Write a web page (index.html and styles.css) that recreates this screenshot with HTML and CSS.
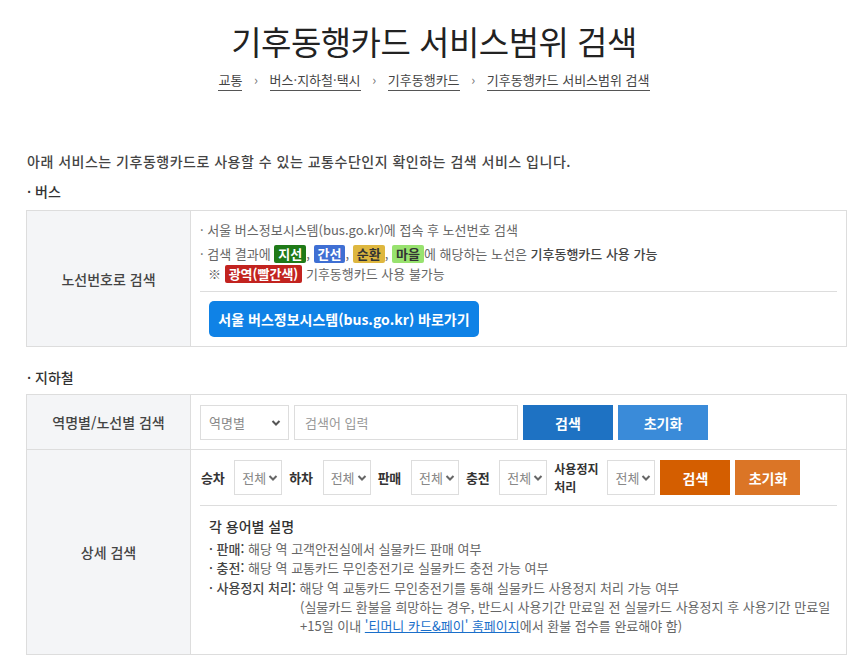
FILE: index.html
```html
<!DOCTYPE html>
<html lang="ko">
<head>
  <meta charset="UTF-8">
  <meta name="viewport" content="width=device-width, initial-scale=1.0">
  <title>기후동행카드 서비스범위 검색</title>
  <link rel="stylesheet" href="styles.css">
</head>
<body>
  <div class="page-header">
    <h1>기후동행카드 서비스범위 검색</h1>
    <div class="breadcrumb">
      <a href="#">교통</a>
      <span class="sep">&rsaquo;</span>
      <a href="#">버스·지하철·택시</a>
      <span class="sep">&rsaquo;</span>
      <a href="#">기후동행카드</a>
      <span class="sep">&rsaquo;</span>
      <a href="#">기후동행카드 서비스범위 검색</a>
    </div>
  </div>

  <div class="content">
    <p class="intro">아래 서비스는 기후동행카드로 사용할 수 있는 교통수단인지 확인하는 검색 서비스 입니다.</p>

    <!-- 버스 -->
    <h3 class="sub-title">· 버스</h3>
    <table class="search-table">
      <tr>
        <th>노선번호로 검색</th>
        <td class="bus-cell">
          <ul class="dot-list">
            <li>· 서울 버스정보시스템(bus.go.kr)에 접속 후 노선번호 검색</li>
            <li class="badge-line">· 검색 결과에 <span class="badge green">지선</span>, <span class="badge blue">간선</span>, <span class="badge yellow">순환</span>, <span class="badge lime">마을</span>에 해당하는 노선은 <strong>기후동행카드 사용 가능</strong></li>
            <li class="note">※ <span class="badge red">광역(빨간색)</span> 기후동행카드 사용 불가능</li>
          </ul>
          <div class="divider"></div>
          <a href="#" class="btn-link">서울 버스정보시스템(bus.go.kr) 바로가기</a>
        </td>
      </tr>
    </table>

    <!-- 지하철 -->
    <h3 class="sub-title">· 지하철</h3>
    <table class="search-table">
      <tr>
        <th>역명별/노선별 검색</th>
        <td class="row-cell">
          <div class="search-row">
            <div class="select-box wide">역명별
              <svg class="chev" width="10" height="8" viewBox="0 0 10 8"><path d="M1.5 2 L5 5.5 L8.5 2" fill="none" stroke="#555" stroke-width="2"/></svg>
            </div>
            <input type="text" class="keyword" placeholder="검색어 입력">
            <button type="button" class="btn blue-dark">검색</button>
            <button type="button" class="btn blue-light">초기화</button>
          </div>
        </td>
      </tr>
      <tr>
        <th>상세 검색</th>
        <td class="detail-cell">
          <div class="filter-row">
            <span class="f-label">승차</span>
            <div class="select-box small">전체<svg class="chev" width="10" height="8" viewBox="0 0 10 8"><path d="M1.5 2 L5 5.5 L8.5 2" fill="none" stroke="#666" stroke-width="2"/></svg></div>
            <span class="f-label">하차</span>
            <div class="select-box small">전체<svg class="chev" width="10" height="8" viewBox="0 0 10 8"><path d="M1.5 2 L5 5.5 L8.5 2" fill="none" stroke="#666" stroke-width="2"/></svg></div>
            <span class="f-label">판매</span>
            <div class="select-box small">전체<svg class="chev" width="10" height="8" viewBox="0 0 10 8"><path d="M1.5 2 L5 5.5 L8.5 2" fill="none" stroke="#666" stroke-width="2"/></svg></div>
            <span class="f-label">충전</span>
            <div class="select-box small">전체<svg class="chev" width="10" height="8" viewBox="0 0 10 8"><path d="M1.5 2 L5 5.5 L8.5 2" fill="none" stroke="#666" stroke-width="2"/></svg></div>
            <span class="f-label two-line"><span>사용정지</span><span>처리</span></span>
            <div class="select-box small">전체<svg class="chev" width="10" height="8" viewBox="0 0 10 8"><path d="M1.5 2 L5 5.5 L8.5 2" fill="none" stroke="#666" stroke-width="2"/></svg></div>
            <button type="button" class="btn orange-dark">검색</button>
            <button type="button" class="btn orange-light">초기화</button>
          </div>
          <div class="divider"></div>
          <div class="desc">
            <h4>각 용어별 설명</h4>
            <ul class="desc-list">
              <li><b>· 판매:</b> 해당 역 고객안전실에서 실물카드 판매 여부</li>
              <li><b>· 충전:</b> 해당 역 교통카드 무인충전기로 실물카드 충전 가능 여부</li>
              <li><b>· 사용정지 처리:</b> 해당 역 교통카드 무인충전기를 통해 실물카드 사용정지 처리 가능 여부
                <p class="indent">(실물카드 환불을 희망하는 경우, 반드시 사용기간 만료일 전 실물카드 사용정지 후 사용기간 만료일<br>+15일 이내 <a href="#">'티머니 카드&amp;페이' 홈페이지</a>에서 환불 접수를 완료해야 함)</p>
              </li>
            </ul>
          </div>
        </td>
      </tr>
    </table>
  </div>
</body>
</html>
```

FILE: styles.css
```css
body {
  margin: 0;
  font-family: "Noto Sans CJK KR", "Noto Sans", sans-serif;
  color: #333;
  background: #fff;
}
.page-header {
  padding-top: 20px;
  text-align: center;
}
.page-header h1 {
  margin: 0;
  font-size: 33px;
  font-weight: 400;
  line-height: 43px;
  color: #222;
  letter-spacing: -0.5px;
}
.breadcrumb {
  margin-top: 7px;
  font-size: 13px;
  line-height: 20px;
  color: #444;
}
.breadcrumb a {
  color: #444;
  text-decoration: none;
  border-bottom: 1px solid #555;
  padding-bottom: 1px;
}
.breadcrumb .sep {
  display: inline-block;
  margin: 0 8px;
  color: #777;
}
.content {
  padding: 0 21px 0 26px;
}
.intro {
  margin: 61px 0 0 1px;
  font-size: 14px;
  line-height: 20px;
  font-weight: 500;
  color: #444;
  letter-spacing: 0.5px;
}
.sub-title {
  margin: 10px 0 9px 1px;
  font-size: 14px;
  line-height: 20px;
  font-weight: 500;
  color: #333;
}
.search-table + .sub-title {
  margin-top: 20px;
  margin-bottom: 7px;
}
.search-table {
  width: 100%;
  border-collapse: collapse;
  border: 1px solid #ddd;
}
.search-table th {
  width: 163px;
  background: #f4f5f7;
  border: 1px solid #ddd;
  font-size: 14px;
  font-weight: 500;
  color: #444;
  padding: 0;
}
.search-table td {
  border: 1px solid #ddd;
  padding: 0 9px 0 9px;
  vertical-align: top;
}
.bus-cell {
  padding-top: 9px !important;
  padding-bottom: 9px !important;
}
.dot-list {
  list-style: none;
  margin: 0;
  padding: 0;
  font-size: 13px;
  line-height: 20px;
  color: #666;
}
.dot-list .badge-line {
  margin-top: 4px;
}
.dot-list .note {
  line-height: 19px;
  padding-left: 8px;
}
.dot-list strong {
  color: #444;
  font-weight: 500;
}
.badge {
  display: inline-block;
  padding: 0 4px;
  line-height: 18px;
  border-radius: 2px;
  font-weight: 700;
  color: #fff;
}
.badge.green { background: #1f7a18; }
.badge.blue { background: #3f6fd3; }
.badge.yellow { background: #deb73f; color: #333; }
.badge.lime { background: #98e26f; color: #333; }
.badge.red { background: #c2231f; }
.divider {
  height: 1px;
  background: #ddd;
}
.bus-cell .divider {
  margin-top: 8px;
}
.btn-link {
  display: inline-block;
  margin: 9px 0 0 9px;
  width: 270px;
  height: 36px;
  line-height: 36px;
  text-align: center;
  background: #0f82e6;
  color: #fff;
  border-radius: 5px;
  font-size: 14px;
  font-weight: 700;
  text-decoration: none;
}
.row-cell {
  padding-top: 10px !important;
  padding-bottom: 9px !important;
}
.search-row {
  display: flex;
  gap: 5px;
  align-items: center;
}
.select-box {
  display: flex;
  align-items: center;
  justify-content: space-between;
  box-sizing: border-box;
  height: 35px;
  border: 1px solid #ddd;
  background: #fff;
  font-size: 13px;
  color: #888;
}
.select-box.wide {
  width: 89px;
  padding: 0 7px 0 8px;
}
.select-box.small {
  width: 48px;
  padding: 0 3px 0 7px;
}
.keyword {
  box-sizing: border-box;
  width: 224px;
  height: 35px;
  border: 1px solid #ddd;
  padding: 0 10px;
  font-family: inherit;
  font-size: 13px;
  color: #333;
}
.keyword::placeholder {
  color: #999;
}
.btn {
  height: 35px;
  border: none;
  color: #fff;
  font-family: inherit;
  font-size: 14px;
  font-weight: 700;
  cursor: pointer;
}
.search-row .btn {
  width: 90px;
}
.btn.blue-dark { background: #1e72c3; }
.btn.blue-light { background: #3a8bd9; }
.btn.orange-dark { background: #d45e00; width: 70px; margin-left: 5px; }
.btn.orange-light { background: #db7526; width: 65px; margin-left: 5px; }
.detail-cell {
  padding-top: 10px !important;
  padding-bottom: 19px !important;
}
.filter-row {
  display: flex;
  align-items: center;
}
.f-label {
  font-size: 13px;
  font-weight: 700;
  color: #333;
  margin: 0 10px 0 7px;
  letter-spacing: -0.3px;
}
.f-label:first-child {
  margin-left: 1px;
}
.f-label.two-line {
  display: flex;
  flex-direction: column;
  font-size: 12px;
  line-height: 17.5px;
  letter-spacing: 0;
  margin-right: 9px;
}
.detail-cell .divider {
  margin-top: 10px;
}
.desc {
  padding-left: 9px;
}
.desc h4 {
  margin: 10px 0 3px;
  font-size: 14px;
  line-height: 20px;
  font-weight: 500;
  color: #333;
}
.desc-list {
  list-style: none;
  margin: 0;
  padding: 0;
  font-size: 13px;
  line-height: 19.3px;
  color: #666;
}
.desc-list b {
  font-weight: 500;
  color: #444;
}
.indent {
  margin: 0;
  padding-left: 91px;
}
.indent a {
  color: #1a6fca;
}
```
